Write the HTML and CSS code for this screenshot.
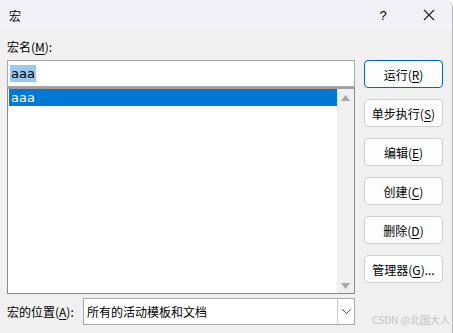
FILE: index.html
```html
<!DOCTYPE html>
<html lang="zh">
<head>
<meta charset="utf-8">
<link rel="stylesheet" href="styles.css">
</head>
<body>
<div class="window">
  <div class="titlebar">
    <span class="title">宏</span>
    <span class="tb-btns">
      <span class="help">?</span>
      <span class="close"><svg width="12" height="12" viewBox="0 0 12 12"><path d="M1 1 L11 11 M11 1 L1 11" stroke="#222" stroke-width="1.2" fill="none"/></svg></span>
    </span>
  </div>
  <div class="content">
    <div class="main">
      <div class="left">
        <div class="label">宏名(<u>M</u>):</div>
        <div class="input"><span class="sel">aaa</span></div>
        <div class="list">
          <div class="items">
            <div class="item selected">aaa</div>
          </div>
          <div class="scrollbar">
            <svg class="arrow" width="9" height="6" viewBox="0 0 9 6"><path d="M0 6 L4.5 0 L9 6 Z" fill="#a8a8a8"/></svg>
            <svg class="arrow" width="9" height="6" viewBox="0 0 9 6"><path d="M0 0 L4.5 6 L9 0 Z" fill="#a8a8a8"/></svg>
          </div>
        </div>
      </div>
      <div class="buttons">
        <button class="btn default">运行(<u>R</u>)</button>
        <button class="btn">单步执行(<u>S</u>)</button>
        <button class="btn">编辑(<u>E</u>)</button>
        <button class="btn">创建(<u>C</u>)</button>
        <button class="btn">删除(<u>D</u>)</button>
        <button class="btn">管理器(<u>G</u>)...</button>
      </div>
    </div>
    <div class="bottom">
      <div class="blabel">宏的位置(<u>A</u>):</div>
      <div class="select">
        <span class="sval">所有的活动模板和文档</span>
        <span class="dd"><svg width="9" height="5" viewBox="0 0 9 5"><path d="M0.5 0.5 L4.5 4.5 L8.5 0.5" stroke="#555" stroke-width="1" fill="none"/></svg></span>
      </div>
      <div class="watermark">CSDN @北国大人</div>
    </div>
  </div>
</div>
</body>
</html>
```
FILE: styles.css
```css
* { box-sizing: border-box; }
html, body { margin: 0; padding: 0; }
body {
  width: 453px;
  height: 333px;
  overflow: hidden;
  background: #ffffff;
  font-family: "Noto Sans CJK SC", "Noto Sans", sans-serif;
  font-size: 12px;
  color: #000;
}
u { text-decoration: underline; text-underline-offset: 2px; }
.window {
  width: 453px;
  height: 333px;
  background: #f0f0f0;
  border-right: 1px solid #b8b8b8;
  border-top-right-radius: 8px;
  overflow: hidden;
  display: flex;
  flex-direction: column;
}
.titlebar {
  height: 30px;
  background: #f3f1f8;
  display: flex;
  align-items: center;
  justify-content: space-between;
  padding-left: 9px;
  flex: none;
}
.title { font-size: 12px; }
.tb-btns { display: flex; align-items: center; }
.help {
  width: 46px;
  text-align: center;
  font-family: "Liberation Sans", sans-serif;
  font-size: 13px;
}
.close {
  width: 46px;
  display: flex;
  justify-content: center;
  align-items: center;
}
.content {
  flex: 1;
  padding: 0 8px 0 7px;
  display: flex;
  flex-direction: column;
}
.main {
  display: flex;
  gap: 9px;
}
.left {
  width: 348px;
  display: flex;
  flex-direction: column;
}
.label {
  height: 30px;
  padding-top: 9px;
  line-height: 16px;
}
.input {
  height: 27px;
  background: #fff;
  border: 1px solid #a8a8a8;
  padding: 2px 2px;
  display: flex;
  align-items: center;
  font-family: "DejaVu Sans", sans-serif;
  font-size: 13px;
}
.sel {
  background: #99c9ef;
  line-height: 17px;
  padding: 0 1px 0 1px;
}
.list {
  height: 207px;
  background: #fff;
  border: 1px solid #8a8a8a;
  border-top: 2px solid #a0a0a0;
  display: flex;
}
.items {
  flex: 1;
  padding: 0 0 0 1px;
}
.item {
  height: 17px;
  line-height: 17px;
  padding-left: 2px;
  font-family: "DejaVu Sans", sans-serif;
  font-size: 13px;
}
.item.selected {
  background: #0078d7;
  color: #fff;
}
.scrollbar {
  width: 17px;
  background: #f0f0f0;
  display: flex;
  flex-direction: column;
  justify-content: space-between;
  align-items: center;
  padding: 6px 0 4px;
}
.buttons {
  padding-top: 30px;
  display: flex;
  flex-direction: column;
  gap: 11px;
}
.btn {
  width: 79px;
  height: 28px;
  background: #fdfdfd;
  border: 1px solid #d0d0d0;
  border-radius: 4px;
  font-family: "Noto Sans CJK SC", "Noto Sans", sans-serif;
  font-size: 12px;
  color: #000;
  padding: 0;
}
.btn.default {
  border: 1px solid #0067c0;
}
.bottom {
  margin-top: 4px;
  display: flex;
  align-items: center;
  height: 27px;
}
.blabel {
  width: 76px;
  flex: none;
}
.select {
  width: 272px;
  height: 27px;
  background: #fff;
  border: 1px solid #a8a8a8;
  display: flex;
  align-items: center;
  justify-content: space-between;
}
.sval { padding-left: 3px; }
.dd {
  width: 17px;
  height: 100%;
  border-left: 1px solid #cfcfcf;
  display: flex;
  align-items: center;
  justify-content: center;
}
.watermark {
  margin-left: auto;
  margin-top: 16px;
  color: #c4c4c4;
  font-size: 10px;
  white-space: nowrap;
  margin-right: -6px;
}
```
